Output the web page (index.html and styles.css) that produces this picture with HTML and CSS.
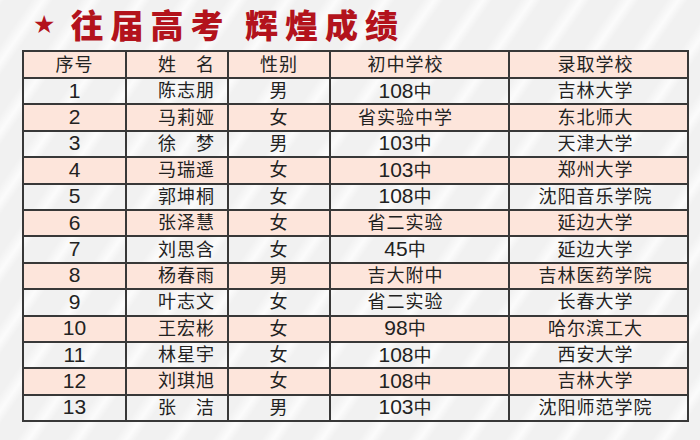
FILE: index.html
```html
<!DOCTYPE html>
<html lang="zh">
<head>
<meta charset="utf-8">
<link rel="stylesheet" href="styles.css">
</head>
<body>
<div class="page">
  <h1 class="title"><span class="star">★</span><span class="title-text">往届高考 辉煌成绩</span></h1>
  <table class="scores">
    <colgroup>
      <col class="c1"><col class="c2"><col class="c3"><col class="c4"><col class="c5">
    </colgroup>
    <thead>
      <tr><th>序号</th><th class="name">姓　名</th><th>性别</th><th class="school">初中学校</th><th class="uni">录取学校</th></tr>
    </thead>
    <tbody>
      <tr><td><span class="num">1</span></td><td class="name">陈志朋</td><td>男</td><td class="school"><span class="num">108</span>中</td><td class="uni">吉林大学</td></tr>
      <tr><td><span class="num">2</span></td><td class="name">马莉娅</td><td>女</td><td class="school">省实验中学</td><td class="uni">东北师大</td></tr>
      <tr><td><span class="num">3</span></td><td class="name">徐　梦</td><td>男</td><td class="school"><span class="num">103</span>中</td><td class="uni">天津大学</td></tr>
      <tr><td><span class="num">4</span></td><td class="name">马瑞遥</td><td>女</td><td class="school"><span class="num">103</span>中</td><td class="uni">郑州大学</td></tr>
      <tr><td><span class="num">5</span></td><td class="name">郭坤桐</td><td>女</td><td class="school"><span class="num">108</span>中</td><td class="uni">沈阳音乐学院</td></tr>
      <tr><td><span class="num">6</span></td><td class="name">张泽慧</td><td>女</td><td class="school">省二实验</td><td class="uni">延边大学</td></tr>
      <tr><td><span class="num">7</span></td><td class="name">刘思含</td><td>女</td><td class="school"><span class="num">45</span>中</td><td class="uni">延边大学</td></tr>
      <tr><td><span class="num">8</span></td><td class="name">杨春雨</td><td>男</td><td class="school">吉大附中</td><td class="uni">吉林医药学院</td></tr>
      <tr><td><span class="num">9</span></td><td class="name">叶志文</td><td>女</td><td class="school">省二实验</td><td class="uni">长春大学</td></tr>
      <tr><td><span class="num">10</span></td><td class="name">王宏彬</td><td>女</td><td class="school"><span class="num">98</span>中</td><td class="uni">哈尔滨工大</td></tr>
      <tr><td><span class="num">11</span></td><td class="name">林星宇</td><td>女</td><td class="school"><span class="num">108</span>中</td><td class="uni">西安大学</td></tr>
      <tr><td><span class="num">12</span></td><td class="name">刘琪旭</td><td>女</td><td class="school"><span class="num">108</span>中</td><td class="uni">吉林大学</td></tr>
      <tr><td><span class="num">13</span></td><td class="name">张　洁</td><td>男</td><td class="school"><span class="num">103</span>中</td><td class="uni">沈阳师范学院</td></tr>
    </tbody>
  </table>
</div>
</body>
</html>
```

FILE: styles.css
```css
html, body {
  margin: 0;
  padding: 0;
}
body {
  width: 700px;
  height: 440px;
  overflow: hidden;
  background-color: #f1f1f1;
  background-image: repeating-linear-gradient(
    -55deg,
    rgba(255,255,255,0.0) 0px,
    rgba(255,255,255,0.0) 22px,
    rgba(255,255,255,0.75) 30px,
    rgba(255,255,255,0.0) 40px
  );
  font-family: "Liberation Sans", "Noto Sans CJK SC", sans-serif;
  color: #222222;
}
.page {
  padding: 0 0 0 22px;
}
.title {
  margin: 0;
  height: 50px;
  display: flex;
  align-items: center;
  padding-left: 11px;
  color: #b3131c;
  font-family: "Noto Sans CJK SC", sans-serif;
  font-weight: 900;
  font-size: 33px;
  line-height: 1;
}
.star {
  font-family: "DejaVu Sans", sans-serif;
  font-size: 25px;
  margin-right: 15px;
  position: relative;
  top: -1px;
}
.title-text {
  letter-spacing: 7px;
  position: relative;
  top: -1px;
}
.scores {
  border-collapse: collapse;
  table-layout: fixed;
  width: 665px;
}
.c1 { width: 103px; }
.c2 { width: 102px; }
.c3 { width: 102px; }
.c4 { width: 179px; }
.c5 { width: 179px; }
.scores th,
.scores td {
  border: 2px solid #383838;
  padding: 0;
  text-align: center;
  font-size: 18px;
  font-weight: 400;
  letter-spacing: 1px;
  line-height: 20px;
  height: 24.4px;
  white-space: nowrap;
}
.scores thead tr {
  background: #fde5db;
}
.scores th {
  height: 25px;
}
.scores tbody tr:nth-child(even) {
  background: #fde5db;
}
.scores .name {
  padding-left: 19px;
}
.scores .school {
  padding-right: 28px;
}
.scores .uni {
  padding-right: 6px;
}
.num {
  font-family: "Liberation Sans", sans-serif;
  font-size: 21px;
  letter-spacing: 0;
}
```
